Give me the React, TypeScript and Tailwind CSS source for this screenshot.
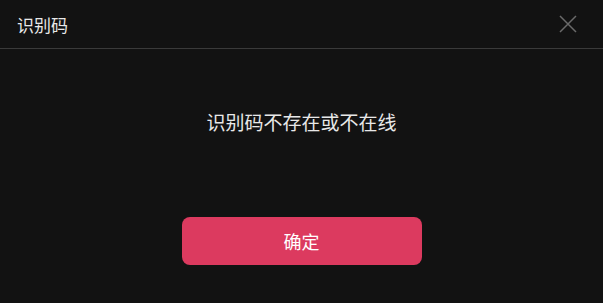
import React from "react";

export default function App() {
  return (
    <div
      className="w-[603px] h-[303px] bg-[#121212] flex flex-col"
      style={{ fontFamily: '"Noto Sans CJK SC", "Noto Sans", sans-serif' }}
    >
      <div className="h-[48px] flex items-center justify-between pl-[17px] pr-[26px] border-b border-[#3a3a3a] box-content">
        <span className="text-[17px] text-[#e8e8e8] leading-none">识别码</span>
        <svg width="18" height="18" viewBox="0 0 18 18" className="block">
          <path d="M1 1L17 17M17 1L1 17" stroke="#6a6a6a" strokeWidth="1.5" />
        </svg>
      </div>
      <div className="flex flex-col items-center">
        <div className="mt-[63px] text-[19px] text-[#e8e8e8] leading-none">识别码不存在或不在线</div>
        <button className="mt-[86px] w-[240px] h-[48px] rounded-[8px] bg-[#dc3a5f] text-white text-[18px]">
          确定
        </button>
      </div>
    </div>
  );
}
